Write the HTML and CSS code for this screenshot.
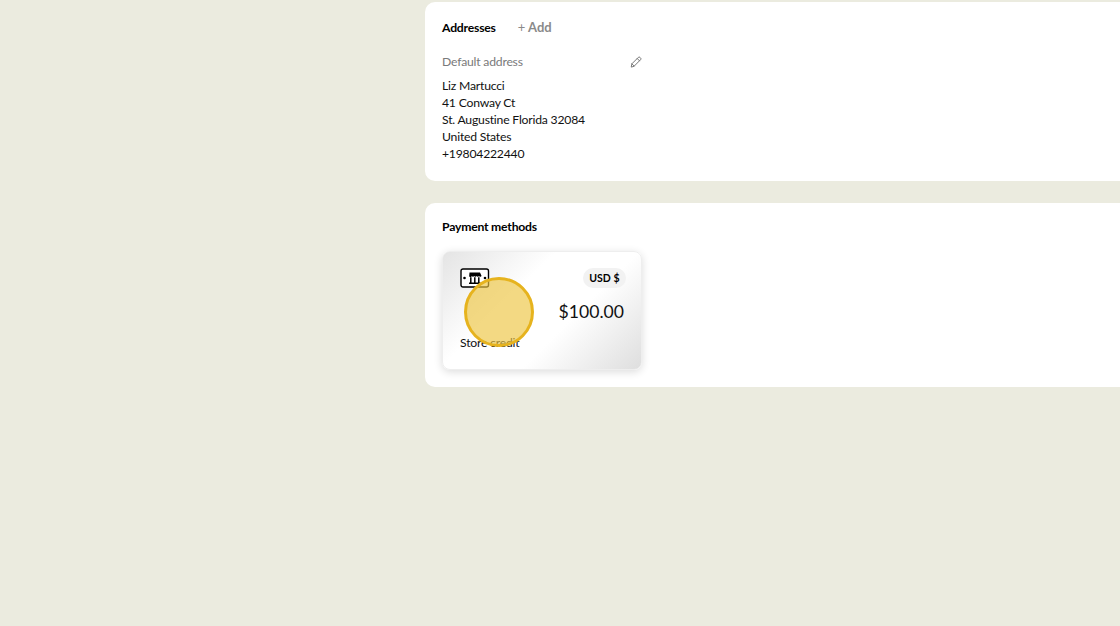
FILE: index.html
```html
<!DOCTYPE html>
<html lang="en">
<head>
<meta charset="utf-8">
<title>Account</title>
<link rel="stylesheet" href="styles.css">
</head>
<body>
<main class="column">
  <section class="panel panel-address">
    <div class="panel-head">
      <h2 class="panel-title">Addresses</h2>
      <span class="add-link"><span class="plus">+</span> Add</span>
    </div>
    <div class="address-head">
      <span class="address-label">Default address</span>
      <svg class="edit-icon" width="12" height="12" viewBox="0 0 12 12" fill="none" stroke="#777" stroke-width="1" stroke-linejoin="round" stroke-linecap="round"><path d="M1.3 10.700l.6-2.900L8.300 1.400a1.200 1.200 0 0 1 1.700 0l.6.6a1.200 1.200 0 0 1 0 1.700L4.200 10.100z"/><path d="M7.200 2.500l2.300 2.300"/><path d="M1.900 7.800l2.300 2.300"/></svg>
    </div>
    <address class="address">
      <div>Liz Martucci</div>
      <div>41 Conway Ct</div>
      <div>St. Augustine Florida 32084</div>
      <div>United States</div>
      <div>+19804222440</div>
    </address>
  </section>
  <section class="panel panel-payment">
    <h2 class="panel-title">Payment methods</h2>
    <div class="credit-card">
      <div class="card-top">
        <svg class="store-icon" width="30" height="20" viewBox="0 0 30 20" fill="none"><rect x="1" y="1" width="27.500" height="18" rx="2" stroke="#000" stroke-width="1.400" fill="#fff"/><circle cx="4.500" cy="10" r="1.300" fill="#000"/><circle cx="25" cy="10" r="1.300" fill="#000"/><path d="M9.500 4.500h10.500l1.500 3.200a1.300 1.300 0 0 1-2.500.3 1.300 1.300 0 0 1-2.400 0 1.300 1.300 0 0 1-2.400 0 1.300 1.300 0 0 1-2.400 0 1.300 1.300 0 0 1-2.600-.3z" fill="#000"/><path d="M10.800 9.300v6M14.800 9.300v6M18.800 9.300v6M9 15.300h11.500" stroke="#000" stroke-width="1.500"/></svg>
        <span class="currency">USD $</span>
      </div>
      <div class="amount">$100.00</div>
      <div class="card-name">Store credit</div>
    </div>
  </section>
</main>
<div class="click-marker"></div>
</body>
</html>
```
FILE: styles.css
```css
* { box-sizing: border-box; }
html, body { margin: 0; height: 100%; overflow: hidden; }
body {
  background: #ebebdf;
  font-family: "Lato", "Noto Sans", sans-serif;
  font-variant-ligatures: none;
  color: #111;
  font-size: 12.200px;
  letter-spacing: -.21px;
  position: relative;
}
.column {
  display: flex;
  flex-direction: column;
  gap: 22px;
  padding: 2px 0 0 424.500px;
  width: 1140px;
}
.panel {
  background: #fff;
  border-radius: 10px;
  padding: 17px 17.500px;
}
.panel-address { height: 179px; }
.panel-payment { height: 184px; padding-top: 15px; }
.panel-head { display: flex; align-items: center; gap: 22px; height: 17px; }
.panel-title {
  margin: 0;
  font-size: 12.200px;
  font-weight: 700;
  line-height: 17px;
  color: #000;
}
.add-link { color: #8a8a8a; font-weight: 700; font-size: 13px; letter-spacing: 0; line-height: 17px; }
.plus { font-weight: 400; }
.address-head {
  display: flex;
  justify-content: space-between;
  align-items: center;
  width: 200px;
  margin-top: 17px;
  height: 17px;
}
.address-label { color: #7a7a7a; }
.address {
  font-style: normal;
  margin-top: 7px;
  line-height: 17px;
}
.credit-card {
  width: 200px;
  height: 119px;
  margin-top: 16px;
  padding: 16px 17px;
  border-radius: 8px;
  border: 1px solid #eee;
  background: linear-gradient(135deg, #e4e4e4 0%, #fff 36%, #fff 62%, #dedede 100%);
  box-shadow: 0 2px 8px rgba(0, 0, 0, .14);
  display: flex;
  flex-direction: column;
}
.card-top { display: flex; justify-content: space-between; align-items: center; height: 20px; }
.store-icon { display: block; }
.currency {
  background: #f2f2f2;
  border-radius: 10px;
  padding: 0 6.500px;
  margin-right: -2px;
  height: 20px;
  line-height: 20px;
  font-size: 10.500px;
  letter-spacing: 0;
  font-weight: 700;
  color: #000;
}
.amount { font-size: 17.600px; letter-spacing: 0; line-height: 24px; text-align: right; margin-top: 12px; color: #111; }
.card-name { margin-top: 10px; line-height: 17px; }
.click-marker {
  position: absolute;
  left: 464px;
  top: 277px;
  width: 70px;
  height: 70px;
  border-radius: 50%;
  background: rgba(236, 196, 64, .65);
  border: 3px solid #e6b31e;
}
```
